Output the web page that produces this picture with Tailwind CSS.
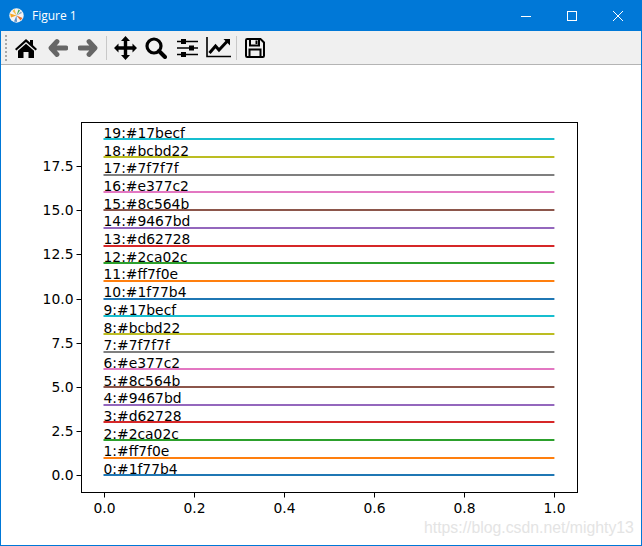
<!DOCTYPE html>
<html lang="en">
<head>
    <meta charset="UTF-8" />
    <title>Figure 1</title>
    <script src="https://cdn.jsdelivr.net/npm/@tailwindcss/browser@4"></script>
</head>
<body class="bg-white overflow-hidden">
    <div class="flex flex-col w-[642px] h-[546px] border border-t-0 border-[#0078d7] box-border">
        <!-- Title bar -->
        <header class="flex items-center h-[31px] bg-[#0078d7] text-white shrink-0">
            <svg class="ml-[8px] mr-[8px]" width="15" height="15" viewBox="0 0 15 15">
                <circle cx="7.5" cy="7.5" r="7.2" fill="#f4f4f4" />
                <path d="M7.5 7.5L1 5.5L2 9.5Z" fill="#f5a623" />
                <path d="M7.5 7.5L5.5 1L3.5 3Z" fill="#f2c14e" />
                <path d="M7.5 7.5L9.5 1.5L11 2.5Z" fill="#3fa34d" />
                <path d="M7.5 7.5L13.5 10L11.5 12.5Z" fill="#e8702a" />
                <path d="M7.5 7.5L8 14L5 13.5Z" fill="#5b8fc7" />
                <path d="M7.5 7.5L13 5L12 3.5Z" fill="#8aa7c9" />
            </svg>
            <span class="text-[12px] font-['Open_Sans',sans-serif]">Figure 1</span>
            <div class="flex ml-auto">
                <div class="flex items-center justify-center w-[46px] h-[31px]">
                    <svg width="10" height="10"><path d="M0 5.5H10" stroke="#fff" fill="none" /></svg>
                </div>
                <div class="flex items-center justify-center w-[46px] h-[31px]">
                    <svg width="10" height="10"><rect x=".5" y=".5" width="9" height="9" stroke="#fff" fill="none" /></svg>
                </div>
                <div class="flex items-center justify-center w-[46px] h-[31px]">
                    <svg width="10" height="10"><path d="M0 0L10 10M10 0L0 10" stroke="#fff" fill="none" /></svg>
                </div>
            </div>
        </header>

        <!-- Toolbar -->
        <div class="flex items-center h-[34px] pl-[4px] bg-[#f0f0f0] border-b border-[#b4b4b4] shrink-0">
            <div class="w-[3px] h-[26px] border-l-2 border-dotted border-[#a8a8a8]"></div>
            <svg class="ml-[7px]" width="22" height="20" viewBox="0 0 22 20">
                <path d="M11 1L15 4.6V2H18V7.3L22 11L20.6 12.4L11 4L1.400 12.400L0 11Z" fill="#000" />
                <path d="M11 5.800L19 12.800V20H13.500V14H8.500V20H3V12.800Z" fill="#000" />
            </svg>
            <svg class="ml-[11px]" width="20" height="20" viewBox="0 0 20 20">
                <path d="M9 3.500L3 10L9 16.500M3.500 10H18" stroke="#666" stroke-width="4.800" fill="none" stroke-linejoin="round" stroke-linecap="round" />
            </svg>
            <svg class="ml-[10px]" width="20" height="20" viewBox="0 0 20 20">
                <path d="M11 3.500L17 10L11 16.500M16.500 10H2" stroke="#666" stroke-width="4.800" fill="none" stroke-linejoin="round" stroke-linecap="round" />
            </svg>
            <div class="ml-[8px] w-px h-[24px] bg-[#c8c8c8]"></div>
            <svg class="ml-[7px]" width="23" height="24" viewBox="0 0 23 24">
                <path d="M11.500 0L16 5H13.200V10.300H18.500V7.500L23 12L18.500 16.500V13.700H13.200V19H16L11.500 24L7 19H9.800V13.700H4.500V16.500L0 12L4.500 7.500V10.300H9.800V5H7Z" fill="#000" />
            </svg>
            <svg class="ml-[8px]" width="22" height="22" viewBox="0 0 22 22">
                <circle cx="9" cy="9" r="7" stroke="#000" stroke-width="3.200" fill="none" />
                <path d="M14 14L20 20" stroke="#000" stroke-width="4" stroke-linecap="round" />
            </svg>
            <svg class="ml-[10px]" width="21" height="20" viewBox="0 0 21 20">
                <path d="M0 3.500H21M0 10H21M0 16.500H21" stroke="#000" stroke-width="1.400" fill="none" />
                <rect x="4" y="1" width="5" height="5" fill="#000" />
                <rect x="12" y="7.500" width="5" height="5" fill="#000" />
                <rect x="4" y="14" width="5" height="5" fill="#000" />
            </svg>
            <svg class="ml-[8px]" width="25" height="21" viewBox="0 0 25 21">
                <path d="M1 0V19.500H25" stroke="#000" stroke-width="1.600" fill="none" />
                <path d="M3.500 16L9.500 9L13 13L21 4.500" stroke="#000" stroke-width="3" fill="none" />
                <path d="M17.500 2H24V8.500Z" fill="#000" />
            </svg>
            <div class="ml-[5px] w-px h-[24px] bg-[#c8c8c8]"></div>
            <svg class="ml-[8px]" width="20" height="20" viewBox="0 0 20 20">
                <path d="M1 2.200Q1 1 2.200 1H15.500L19 4.500V17.800Q19 19 17.800 19H2.200Q1 19 1 17.800Z" stroke="#000" stroke-width="2" fill="none" />
                <path d="M5 1.500V7.500H14V1.500" stroke="#000" stroke-width="2" fill="none" />
                <rect x="10.500" y="2.500" width="2" height="3.500" fill="#000" />
                <path d="M4.500 18.500V11.500H15.500V18.500" stroke="#000" stroke-width="2" fill="none" />
            </svg>
        </div>

        <!-- Canvas -->
        <main class="relative w-[640px] h-[480px] shrink-0 bg-white">
            <svg id="plot" class="block" width="640" height="480" viewBox="0 0 640 480"></svg>
            <span class="absolute left-[423px] top-[452px] text-[15.8px] leading-[22px] text-[#e4e4e4] font-['Liberation_Sans',sans-serif] whitespace-nowrap">https://blog.csdn.net/mighty13</span>
        </main>
    </div>

    <script>
        const palette = ['#1f77b4', '#ff7f0e', '#2ca02c', '#d62728', '#9467bd', '#8c564b', '#e377c2', '#7f7f7f', '#bcbd22', '#17becf'];
        const font = 'font-family="DejaVu Sans, sans-serif" font-size="13.89" fill="#000"';

        // Same axes box as a default 640x480 matplotlib figure
        const axLeft = 80.5, axRight = 576.5, axTop = 57.5, axBottom = 427.5;
        const toX = v => 102.5 + v * 450.9;
        const toY = v => 410.4 - v * 17.684;

        let out = '';

        for (let i = 0; i < 20; i++) {
            const y = Math.round(toY(i));
            const color = palette[i % 10];
            out += `<rect x="${toX(0)}" y="${y - 1}" width="${toX(1) - toX(0)}" height="2" fill="${color}" />`;
        }
        for (let i = 0; i < 20; i++) {
            out += `<text x="${toX(0)}" y="${Math.round(toY(i) - 1.4)}" ${font}>${i}:${palette[i % 10]}</text>`;
        }

        // Y ticks
        for (let v = 0; v <= 17.5; v += 2.5) {
            const y = Math.round(toY(v)) + 0.5;
            out += `<path d="M${axLeft - 5} ${y}H${axLeft}" stroke="#000" fill="none" />`;
            out += `<text x="${axLeft - 8}" y="${y + 4}" text-anchor="end" ${font}>${v.toFixed(1)}</text>`;
        }

        // X ticks
        for (let k = 0; k <= 5; k++) {
            const v = k / 5;
            const x = Math.round(toX(v)) + 0.5;
            out += `<path d="M${x} ${axBottom}V${axBottom + 5}" stroke="#000" fill="none" />`;
            out += `<text x="${x}" y="${axBottom + 20}" text-anchor="middle" ${font}>${v.toFixed(1)}</text>`;
        }

        out += `<rect x="${axLeft}" y="${axTop}" width="${axRight - axLeft}" height="${axBottom - axTop}" stroke="#000" fill="none" />`;
        document.getElementById('plot').innerHTML = out;
    </script>
</body>
</html>
